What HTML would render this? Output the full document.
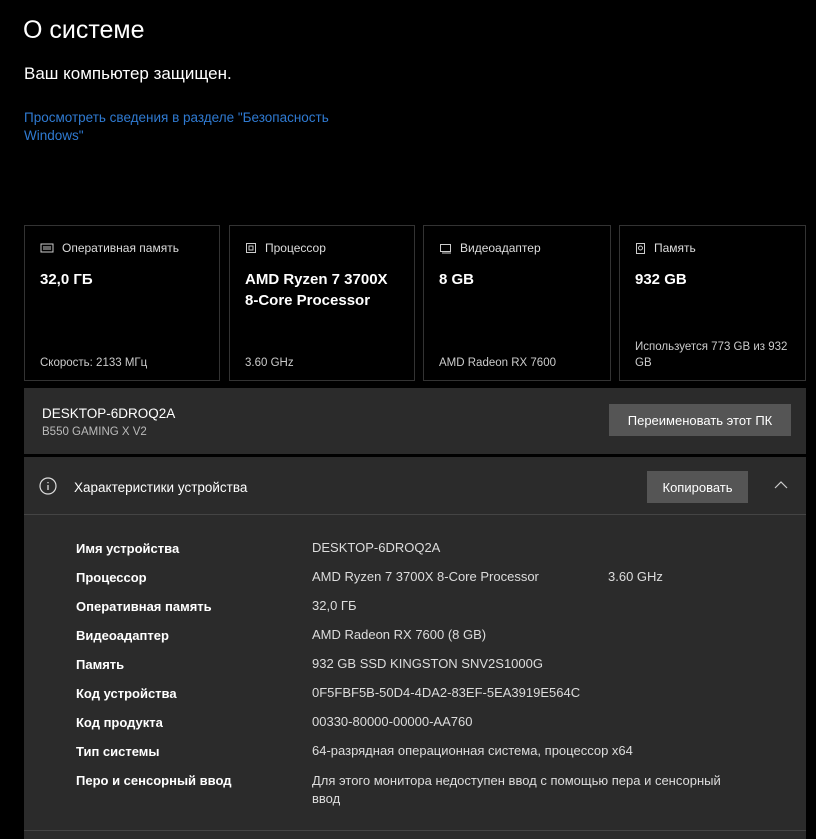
<!DOCTYPE html>
<html><head><meta charset="utf-8"><style>
*{margin:0;padding:0;box-sizing:border-box}
body{width:816px;height:839px;background:#000;color:#fff;font-family:"Liberation Sans","DejaVu Sans",sans-serif;position:relative;overflow:hidden}
.a{position:absolute;white-space:nowrap}
.card{position:absolute;top:225px;height:156px;border:1px solid #333;background:#000}
.card .h{position:absolute;left:15px;top:15px;font-size:12px;color:#ddd;display:flex;align-items:center;gap:8px}
.card .v{position:absolute;left:15px;top:43px;font-size:15px;font-weight:bold;line-height:21px}
.card .f{position:absolute;left:15px;bottom:9px;font-size:11.5px;color:#ccc;line-height:16px}
.p{background:#2b2b2b;position:absolute;left:24px;width:782px}
.btn{position:absolute;background:#555;color:#fff;font-size:13px;display:flex;align-items:center;justify-content:center}
.lbl{position:absolute;left:76px;font-size:13px;font-weight:bold;color:#fff}
.val{position:absolute;left:312px;font-size:13px;color:#ddd;line-height:18px}
</style></head><body>
<div class="a" style="left:23px;top:16px;font-size:25px;font-weight:300">О системе</div>
<div class="a" style="left:24px;top:64px;font-size:17px">Ваш компьютер защищен.</div>
<div class="a" style="left:24px;top:109px;font-size:13.5px;color:#2f7ad1;line-height:18px;white-space:normal;width:340px">Просмотреть сведения в разделе "Безопасность Windows"</div>

<div class="card" style="left:24px;width:196px"><div class="h"><svg width="14" height="10"><rect x="1" y="1" width="12" height="8" fill="none" stroke="#ccc"/><path d="M3 4h8M3 6h8" stroke="#ccc"/></svg>Оперативная память</div><div class="v">32,0 ГБ</div><div class="f">Скорость: 2133 МГц</div></div>
<div class="card" style="left:229px;width:186px"><div class="h"><svg width="12" height="12"><rect x="1.5" y="1.5" width="9" height="9" fill="none" stroke="#ccc"/><rect x="4" y="4" width="4" height="4" fill="none" stroke="#ccc"/></svg>Процессор</div><div class="v">AMD Ryzen 7 3700X<br>8-Core Processor</div><div class="f">3.60 GHz</div></div>
<div class="card" style="left:423px;width:188px"><div class="h"><svg width="13" height="11"><rect x="1.5" y="1.5" width="10" height="7" fill="none" stroke="#ccc"/><path d="M3 10h9" stroke="#ccc"/></svg>Видеоадаптер</div><div class="v">8 GB</div><div class="f">AMD Radeon RX 7600</div></div>
<div class="card" style="left:619px;width:187px"><div class="h"><svg width="11" height="13"><rect x="1.5" y="1.5" width="8" height="10" fill="none" stroke="#ccc"/><circle cx="5.5" cy="6" r="2" fill="none" stroke="#ccc"/></svg>Память</div><div class="v">932 GB</div><div class="f" style="width:165px;white-space:normal">Используется 773 GB из 932 GB</div></div>

<div class="p" style="top:388px;height:66px">
<div class="a" style="left:18px;top:18px;font-size:13.5px">DESKTOP-6DROQ2A</div>
<div class="a" style="left:18px;top:38px;font-size:11.5px;color:#bbb">B550 GAMING X V2</div>
<div class="btn" style="left:585px;top:16px;width:182px;height:32px">Переименовать этот ПК</div>
</div>

<div class="p" style="top:457px;height:382px">
<div style="position:absolute;left:0;right:0;top:57px;height:1px;background:#444"></div>
<svg class="a" style="left:15px;top:20px" width="18" height="18"><circle cx="9" cy="9" r="8" fill="none" stroke="#ddd" stroke-width="1.2"/><path d="M9 8v5M9 5v1.2" stroke="#ddd" stroke-width="1.3"/></svg>
<div class="a" style="left:50px;top:23px;font-size:13.5px">Характеристики устройства</div>
<div class="btn" style="left:623px;top:14px;width:101px;height:32px">Копировать</div>
<svg class="a" style="left:750px;top:23px" width="14" height="10"><path d="M1 8l6-6 6 6" fill="none" stroke="#ccc" stroke-width="1.2"/></svg>
<div style="position:absolute;left:0;right:0;top:373px;height:1px;background:#444"></div>
</div>

<div class="lbl" style="top:541px">Имя устройства</div><div class="val" style="top:539px">DESKTOP-6DROQ2A</div>
<div class="lbl" style="top:570px">Процессор</div><div class="val" style="top:568px">AMD Ryzen 7 3700X 8-Core Processor</div><div class="val" style="left:608px;top:568px">3.60 GHz</div>
<div class="lbl" style="top:599px">Оперативная память</div><div class="val" style="top:597px">32,0 ГБ</div>
<div class="lbl" style="top:628px">Видеоадаптер</div><div class="val" style="top:626px">AMD Radeon RX 7600 (8 GB)</div>
<div class="lbl" style="top:657px">Память</div><div class="val" style="top:655px">932 GB SSD KINGSTON SNV2S1000G</div>
<div class="lbl" style="top:686px">Код устройства</div><div class="val" style="top:684px">0F5FBF5B-50D4-4DA2-83EF-5EA3919E564C</div>
<div class="lbl" style="top:715px">Код продукта</div><div class="val" style="top:713px">00330-80000-00000-AA760</div>
<div class="lbl" style="top:744px">Тип системы</div><div class="val" style="top:742px">64-разрядная операционная система, процессор x64</div>
<div class="lbl" style="top:773px">Перо и сенсорный ввод</div><div class="val" style="top:772px;width:430px;white-space:normal">Для этого монитора недоступен ввод с помощью пера и сенсорный ввод</div>
</body></html>
